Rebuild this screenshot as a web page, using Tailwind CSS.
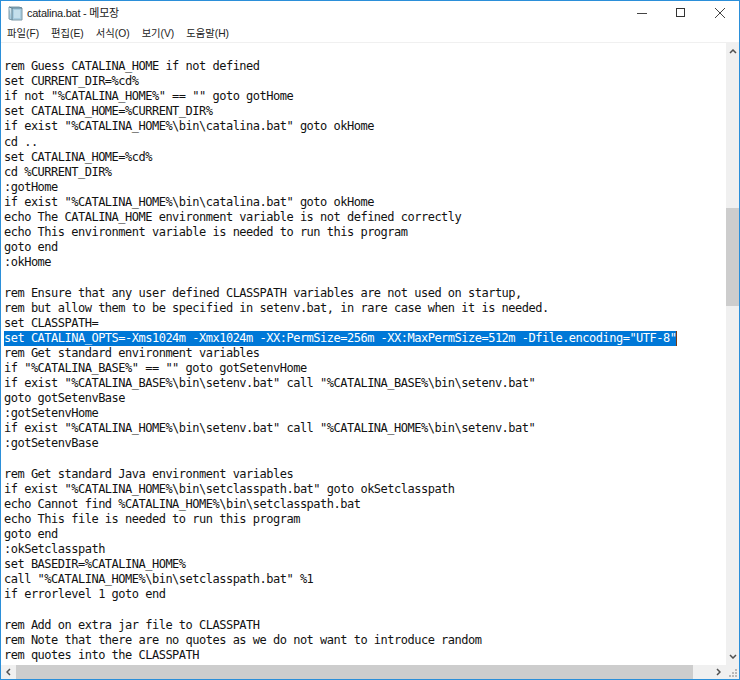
<!DOCTYPE html>
<html lang="ko">
<head>
<meta charset="UTF-8">
<title>catalina.bat - 메모장</title>
<script src="https://cdn.jsdelivr.net/npm/@tailwindcss/browser@4"></script>
</head>
<body class="bg-white">
<div class="w-[740px] h-[680px] flex flex-col overflow-hidden border border-[#2b8fd9] bg-white">
  <!-- title bar -->
  <div class="h-[24px] shrink-0 flex items-center text-[11px] text-[#1a1a1a]">
    <svg class="ml-[7px] mr-[4px] w-[15px] h-[16px]" viewBox="0 0 15 16">
      <path d="M1 2h10l3 1v12H4l-3-1z" fill="#a9cde0" stroke="#7f9aa8" stroke-width="1"/>
      <path d="M1 2l3 1v12" fill="#cfe3ec" stroke="#5b7d8e"/>
      <path d="M4 3h10" stroke="#5b7d8e"/>
      <path d="M6 6h6M6 8h6M6 10h6M6 12h6" stroke="#dff0f7"/>
    </svg>
    <span class="tracking-[-0.25px] font-['Liberation_Sans','Noto_Sans_CJK_KR',sans-serif]">catalina.bat - 메모장</span>
    <div class="ml-auto flex items-center">
      <div class="w-[39px] h-[24px] flex items-center justify-center"><svg class="w-[10px] h-[10px]" viewBox="0 0 10 10"><path d="M0 5.5h10" stroke="#444"/></svg></div>
      <div class="w-[39px] h-[24px] flex items-center justify-center"><svg class="w-[10px] h-[10px]" viewBox="0 0 10 10"><rect x="0.5" y="0.5" width="8" height="8" fill="none" stroke="#333"/></svg></div>
      <div class="w-[39px] h-[24px] flex items-center justify-center"><svg class="w-[10px] h-[10px]" viewBox="0 0 10 10"><path d="M0 0l10 10M10 0L0 10" stroke="#444"/></svg></div>
    </div>
  </div>
  <!-- menu -->
  <div class="h-[17px] shrink-0 flex items-center gap-[12px] pl-[6px] text-[10.3px] text-[#222] font-['Liberation_Sans','Noto_Sans_CJK_KR',sans-serif]">
    <span>파일(F)</span><span>편집(E)</span><span>서식(O)</span><span>보기(V)</span><span>도움말(H)</span>
  </div>
  <div class="flex-1 flex min-h-0 border-t border-t-[#f0f0f0]">
    <pre class="flex-1 min-w-0 overflow-hidden pl-[3px] pt-[1px] text-[12px] leading-[15.1px] tracking-[-0.5px] text-[#111] font-['DejaVu_Sans_Mono',monospace]">

rem Guess CATALINA_HOME if not defined
set CURRENT_DIR=%cd%
if not "%CATALINA_HOME%" == "" goto gotHome
set CATALINA_HOME=%CURRENT_DIR%
if exist "%CATALINA_HOME%\bin\catalina.bat" goto okHome
cd ..
set CATALINA_HOME=%cd%
cd %CURRENT_DIR%
:gotHome
if exist "%CATALINA_HOME%\bin\catalina.bat" goto okHome
echo The CATALINA_HOME environment variable is not defined correctly
echo This environment variable is needed to run this program
goto end
:okHome

rem Ensure that any user defined CLASSPATH variables are not used on startup,
rem but allow them to be specified in setenv.bat, in rare case when it is needed.
set CLASSPATH=
<span class="inline-block bg-[#0078d7] text-white border-r border-r-[#7a3a10]">set CATALINA_OPTS=-Xms1024m -Xmx1024m -XX:PermSize=256m -XX:MaxPermSize=512m -Dfile.encoding="UTF-8"</span>
rem Get standard environment variables
if "%CATALINA_BASE%" == "" goto gotSetenvHome
if exist "%CATALINA_BASE%\bin\setenv.bat" call "%CATALINA_BASE%\bin\setenv.bat"
goto gotSetenvBase
:gotSetenvHome
if exist "%CATALINA_HOME%\bin\setenv.bat" call "%CATALINA_HOME%\bin\setenv.bat"
:gotSetenvBase

rem Get standard Java environment variables
if exist "%CATALINA_HOME%\bin\setclasspath.bat" goto okSetclasspath
echo Cannot find %CATALINA_HOME%\bin\setclasspath.bat
echo This file is needed to run this program
goto end
:okSetclasspath
set BASEDIR=%CATALINA_HOME%
call "%CATALINA_HOME%\bin\setclasspath.bat" %1
if errorlevel 1 goto end

rem Add on extra jar file to CLASSPATH
rem Note that there are no quotes as we do not want to introduce random
rem quotes into the CLASSPATH
</pre>
    <!-- vertical scrollbar -->
    <div class="w-[13px] shrink-0 flex flex-col bg-[#f0f0f0]">
      <div class="h-[17px] shrink-0 flex items-center justify-center"><svg class="w-[8px] h-[5px]" viewBox="0 0 8 5"><path d="M1 4l3-3 3 3" fill="none" stroke="#505050" stroke-width="1.5"/></svg></div>
      <div class="h-[148px] shrink-0"></div>
      <div class="h-[98px] shrink-0 bg-[#cdcdcd]"></div>
      <div class="flex-1"></div>
      <div class="h-[17px] shrink-0 flex items-center justify-center"><svg class="w-[8px] h-[5px]" viewBox="0 0 8 5"><path d="M1 1l3 3 3-3" fill="none" stroke="#505050" stroke-width="1.5"/></svg></div>
    </div>
  </div>
  <!-- horizontal scrollbar -->
  <div class="h-[14px] shrink-0 flex bg-[#f0f0f0]">
    <div class="w-[15px] shrink-0 flex items-center justify-center"><svg class="w-[5px] h-[8px]" viewBox="0 0 5 8"><path d="M4 1L1 4l3 3" fill="none" stroke="#505050" stroke-width="1.5"/></svg></div>
    <div class="w-[677px] shrink-0 bg-[#cdcdcd]"></div>
    <div class="w-[15px] ml-auto shrink-0 flex items-center justify-center"><svg class="w-[5px] h-[8px]" viewBox="0 0 5 8"><path d="M1 1l3 3-3 3" fill="none" stroke="#505050" stroke-width="1.5"/></svg></div>
    <div class="w-[13px] shrink-0 flex items-end justify-end pr-[1px] pb-[1px]"><svg class="w-[9px] h-[9px]" viewBox="0 0 9 9"><path d="M6 0h2v2H6zM3 3h2v2H3zM6 3h2v2H6zM0 6h2v2H0zM3 6h2v2H3zM6 6h2v2H6z" fill="#b8b8b8"/></svg></div>
  </div>
</div>
</body>
</html>
